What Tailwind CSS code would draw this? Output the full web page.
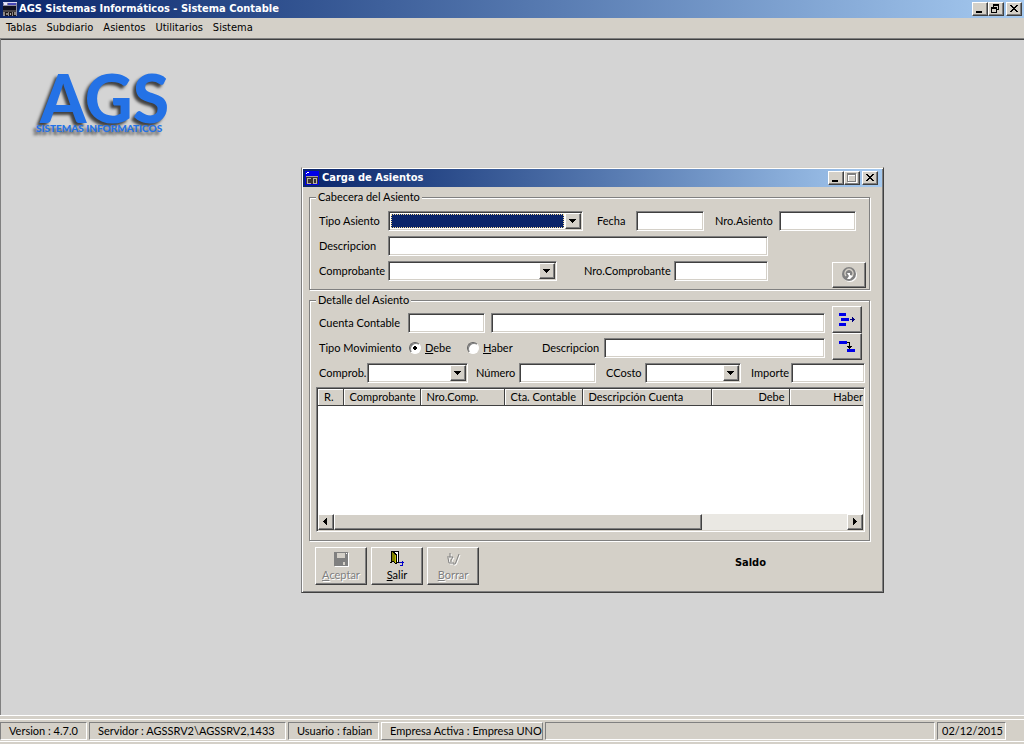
<!DOCTYPE html>
<html lang="es">
<head>
<meta charset="utf-8">
<title>AGS Sistemas Informáticos - Sistema Contable</title>
<script src="https://cdn.jsdelivr.net/npm/@tailwindcss/browser@4"></script>
</head>
<body class="flex h-screen flex-col overflow-hidden bg-[#d4d0c8] font-['Lato','Liberation_Sans',Arial,sans-serif] text-[11px] leading-3 text-black">

<!-- Application title bar -->
<header class="flex h-[18px] shrink-0 items-center bg-linear-to-r from-[#0a246a] to-[#a6caf0] pr-[2px] pl-[2px]">
  <svg class="mr-px size-4" viewBox="0 0 16 16" shape-rendering="crispEdges" aria-hidden="true">
    <rect x="1" y="1" width="14" height="14" fill="#8c8ca0"/><rect x="1" y="1" width="14" height="1" fill="#d8d8f0"/>
    <rect x="2" y="2" width="3" height="2" fill="#e8e8ff"/><rect x="6" y="2" width="8" height="2" fill="#4848b8"/>
    <rect x="1" y="5" width="13" height="4" fill="#10101c"/><rect x="1" y="9" width="13" height="2" fill="#4a4648"/>
    <rect x="1" y="11" width="13" height="3" fill="#8a8480"/><path d="M4 11h2v1H4v2h2v1H3v-4zM7 11h3v4H7zM11 11h1v3h2v1h-3z" fill="#1c1818"/>
    <rect x="8" y="12" width="1" height="2" fill="#aaa"/>
  </svg>
  <h1 class="flex-1 font-['DejaVu_Sans_Condensed','DejaVu_Sans',sans-serif] text-[11px] font-bold whitespace-nowrap text-white">AGS Sistemas Informáticos - Sistema Contable</h1>
  <button aria-label="Minimizar" class="h-[14px] w-4 border border-t-white border-r-[#404040] border-b-[#404040] border-l-white bg-[#d4d0c8] shadow-[inset_-1px_-1px_#808080]"><svg class="size-full" viewBox="0 0 14 12" shape-rendering="crispEdges"><path d="M3 8h6v2H3z"/></svg></button>
  <button aria-label="Restaurar" class="mr-[2px] h-[14px] w-4 border border-t-white border-r-[#404040] border-b-[#404040] border-l-white bg-[#d4d0c8] shadow-[inset_-1px_-1px_#808080]"><svg class="size-full" viewBox="0 0 14 12" shape-rendering="crispEdges"><path fill-rule="evenodd" d="M4 1h6v6H8V6h1V3H5v1H4zM2 4h6v6H2zM3 6v3h4V6z"/></svg></button>
  <button aria-label="Cerrar" class="h-[14px] w-4 border border-t-white border-r-[#404040] border-b-[#404040] border-l-white bg-[#d4d0c8] shadow-[inset_-1px_-1px_#808080]"><svg class="size-full" viewBox="0 0 14 12" shape-rendering="crispEdges"><path d="M3 2h2v1h1v1h2V3h1V2h2v1h-1v1H9v1H8v1h1v1h1v1h1v1H9V8H8V7H6v1H5v1H3V8h1V7h1V6h1V5H5V4H4V3H3z"/></svg></button>
</header>

<!-- Menu bar -->
<nav class="flex h-5 shrink-0 items-center gap-[10px] px-[6px] font-['DejaVu_Sans_Condensed','DejaVu_Sans',sans-serif] text-[11px]">
  <button>Tablas</button><button>Subdiario</button><button>Asientos</button><button>Utilitarios</button><button>Sistema</button>
</nav>

<!-- Workspace -->
<main class="relative flex-1 border-t border-l border-[#808080] bg-[#d4d4d4] shadow-[inset_0_1px_#404040]">
  <div class="absolute top-[35px] left-[35px] font-['Lato',sans-serif] font-black text-[#2472e6] [text-shadow:-3px_3px_3px_rgba(0,0,0,0.7)]">
    <p class="pl-1 text-[66px] leading-[48px]">AGS</p>
    <p class="text-[10px] leading-3 whitespace-nowrap">SISTEMAS INFORMATICOS</p>
  </div>

  <!-- Journal entry window -->
  <section aria-labelledby="dlg" class="absolute top-[128px] left-[300px] w-[583px] border border-t-[#d4d0c8] border-r-[#404040] border-b-[#404040] border-l-[#808080] bg-[#d4d0c8] p-px shadow-[inset_1px_1px_white,inset_-1px_-1px_#808080]">
    <div class="flex h-[18px] items-center bg-linear-to-r from-[#0a246a] to-[#a6caf0] pr-1 pl-[2px]">
      <svg class="mr-[3px] h-[14px] w-[14px]" viewBox="0 0 14 14" shape-rendering="crispEdges" aria-hidden="true">
        <rect width="14" height="14" fill="#0000e8"/><path d="M2 1h2v1H2zM1 2h1v1H1z" fill="#fff"/>
        <path d="M1 5h12v1H1z" fill="#a8a098"/><path d="M1 6h12v7H1z" fill="#383430"/><path d="M2 7h4v1H3v4h3v1H2zM8 7h4v6H8z" fill="#b8b0a8"/><path d="M9 8h2v4H9z" fill="#383430"/>
      </svg>
      <h2 id="dlg" class="flex-1 font-['DejaVu_Sans_Condensed','DejaVu_Sans',sans-serif] text-[11px] font-bold text-white">Carga de Asientos</h2>
      <button aria-label="Minimizar" class="h-[14px] w-4 border border-t-white border-r-[#404040] border-b-[#404040] border-l-white bg-[#d4d0c8] shadow-[inset_-1px_-1px_#808080]"><svg class="size-full" viewBox="0 0 14 12" shape-rendering="crispEdges"><path d="M3 8h6v2H3z"/></svg></button>
      <button aria-label="Maximizar" disabled class="mr-[2px] h-[14px] w-4 border border-t-white border-r-[#404040] border-b-[#404040] border-l-white bg-[#d4d0c8] shadow-[inset_-1px_-1px_#808080]"><svg class="size-full" viewBox="0 0 14 12" shape-rendering="crispEdges" fill-rule="evenodd"><path fill="#fff" d="M3 2h9v9H3zM4 4v6h7V4z"/><path fill="#808080" d="M2 1h9v9H2zM3 3v6h7V3z"/></svg></button>
      <button aria-label="Cerrar" class="h-[14px] w-4 border border-t-white border-r-[#404040] border-b-[#404040] border-l-white bg-[#d4d0c8] shadow-[inset_-1px_-1px_#808080]"><svg class="size-full" viewBox="0 0 14 12" shape-rendering="crispEdges"><path d="M3 2h2v1h1v1h2V3h1V2h2v1h-1v1H9v1H8v1h1v1h1v1h1v1H9V8H8V7H6v1H5v1H3V8h1V7h1V6h1V5H5V4H4V3H3z"/></svg></button>
    </div>

    <form class="flex flex-col pt-1 pr-3 pb-[6px] pl-[6px]">
      <fieldset class="min-w-0 border border-[#808080] pr-[3px] pb-2 pl-[9px] shadow-[1px_1px_white,inset_1px_1px_white]">
        <legend class="-ml-[3px] bg-[#d4d0c8] px-[2px]">Cabecera del Asiento</legend>
        <div class="flex flex-col gap-[5px] pt-2">
          <div class="flex h-5 items-center">
            <label for="tipo" class="w-[69px]">Tipo Asiento</label>
            <span class="mr-[14px] flex h-5 w-[195px] border border-t-[#808080] border-r-white border-b-white border-l-[#808080] bg-white p-px shadow-[inset_1px_1px_#404040,inset_-1px_-1px_#d4d0c8]">
              <select id="tipo" class="m-px min-w-0 flex-1 appearance-none border border-dotted border-[#f5db95] bg-[#0a246a] text-white outline-none"><option></option></select>
              <svg class="h-4 w-4 border border-t-white border-r-[#404040] border-b-[#404040] border-l-white bg-[#d4d0c8] shadow-[inset_-1px_-1px_#808080]" viewBox="0 0 14 14" shape-rendering="crispEdges" aria-hidden="true"><path d="M3 5h7v1H9v1H8v1H7v1H6V8H5V7H4V6H3z"/></svg>
            </span>
            <label for="fecha" class="w-[39px]">Fecha</label>
            <input id="fecha" class="mr-[11px] h-5 w-[68px] border border-t-[#808080] border-r-white border-b-white border-l-[#808080] bg-white px-1 shadow-[inset_1px_1px_#404040,inset_-1px_-1px_#d4d0c8] outline-none">
            <label for="nro" class="w-16">Nro.Asiento</label>
            <input id="nro" class="h-5 w-[77px] border border-t-[#808080] border-r-white border-b-white border-l-[#808080] bg-white px-1 shadow-[inset_1px_1px_#404040,inset_-1px_-1px_#d4d0c8] outline-none">
          </div>
          <div class="flex h-5 items-center">
            <label for="desc" class="w-[69px]">Descripcion</label>
            <input id="desc" class="h-5 w-[380px] border border-t-[#808080] border-r-white border-b-white border-l-[#808080] bg-white px-1 shadow-[inset_1px_1px_#404040,inset_-1px_-1px_#d4d0c8] outline-none">
          </div>
          <div class="flex h-5 items-center">
            <label for="comp" class="w-[69px]">Comprobante</label>
            <span class="mr-[27px] flex h-5 w-[169px] border border-t-[#808080] border-r-white border-b-white border-l-[#808080] bg-white p-px shadow-[inset_1px_1px_#404040,inset_-1px_-1px_#d4d0c8]">
              <select id="comp" class="min-w-0 flex-1 appearance-none outline-none"><option></option></select>
              <svg class="h-4 w-4 border border-t-white border-r-[#404040] border-b-[#404040] border-l-white bg-[#d4d0c8] shadow-[inset_-1px_-1px_#808080]" viewBox="0 0 14 14" shape-rendering="crispEdges" aria-hidden="true"><path d="M3 5h7v1H9v1H8v1H7v1H6V8H5V7H4V6H3z"/></svg>
            </span>
            <label for="nrocomp" class="w-[90px]">Nro.Comprobante</label>
            <input id="nrocomp" class="h-5 w-[94px] border border-t-[#808080] border-r-white border-b-white border-l-[#808080] bg-white px-1 shadow-[inset_1px_1px_#404040,inset_-1px_-1px_#d4d0c8] outline-none">
            <button type="button" disabled aria-label="Confirmar cabecera" class="mt-[7px] ml-auto grid h-[26px] w-[34px] shrink-0 place-items-center border border-t-white border-r-[#404040] border-b-[#404040] border-l-white bg-[#d4d0c8] shadow-[inset_-1px_-1px_#808080]">
              <svg class="size-4" viewBox="0 0 16 16"><circle cx="9" cy="8" r="7" fill="#fff"/><circle cx="8" cy="7" r="7" fill="#808080"/><path d="M5 9A4 4 0 1 1 11 9" fill="none" stroke="#d4d0c8" stroke-width="1.500"/><path d="M6 6h3v2l3 1-3 3H6l2-3z" fill="#fff"/></svg>
            </button>
          </div>
        </div>
      </fieldset>

      <fieldset class="mt-1 min-w-0 border border-[#808080] pr-1 pb-2 pl-[6px] shadow-[1px_1px_white,inset_1px_1px_white]">
        <legend class="bg-[#d4d0c8] px-[2px]">Detalle del Asiento</legend>
        <div class="flex pl-[3px]">
          <div class="flex min-w-0 flex-1 flex-col gap-[5px] pt-[7px] pr-[7px]">
            <div class="flex h-5 items-center">
              <label for="cta" class="w-[89px]">Cuenta Contable</label>
              <input id="cta" class="mr-[6px] h-5 w-[77px] border border-t-[#808080] border-r-white border-b-white border-l-[#808080] bg-white px-1 shadow-[inset_1px_1px_#404040,inset_-1px_-1px_#d4d0c8] outline-none">
              <input aria-label="Nombre de la cuenta" class="h-5 min-w-0 flex-1 border border-t-[#808080] border-r-white border-b-white border-l-[#808080] bg-white px-1 shadow-[inset_1px_1px_#404040,inset_-1px_-1px_#d4d0c8] outline-none">
            </div>
            <div class="flex h-5 items-center">
              <span class="w-[90px]">Tipo Movimiento</span>
              <label class="flex w-[58px] items-center gap-1"><input type="radio" name="mov" checked class="size-3 appearance-none rounded-full border border-t-[#606060] border-r-white border-b-white border-l-[#606060] bg-white bg-[radial-gradient(circle,#000_2px,#fff_2px)] shadow-[inset_1px_1px_#808080]"><span><u>D</u>ebe</span></label>
              <label class="flex w-[75px] items-center gap-1"><input type="radio" name="mov" class="size-3 appearance-none rounded-full border border-t-[#606060] border-r-white border-b-white border-l-[#606060] bg-white shadow-[inset_1px_1px_#808080]"><span><u>H</u>aber</span></label>
              <label for="desc2" class="w-[62px]">Descripcion</label>
              <input id="desc2" class="h-5 min-w-0 flex-1 border border-t-[#808080] border-r-white border-b-white border-l-[#808080] bg-white px-1 shadow-[inset_1px_1px_#404040,inset_-1px_-1px_#d4d0c8] outline-none">
            </div>
          </div>
          <div class="mr-[3px] flex shrink-0 flex-col">
            <button type="button" aria-label="Agregar renglón" class="grid h-[27px] w-[30px] place-items-center border border-t-white border-r-[#404040] border-b-[#404040] border-l-white shadow-[inset_-1px_-1px_#808080]">
              <svg class="h-4 w-[18px]" viewBox="0 0 18 16" shape-rendering="crispEdges"><path d="M1 1h7v3H1zM3 6h8v3H3zM1 11h7v3H1z" fill="#0000e8"/><path d="M12 7h5v1h-5zM14 5h1v5h-1zM15 6h1v3h-1z" fill="#000080"/></svg>
            </button>
            <button type="button" aria-label="Insertar renglón" class="grid h-[27px] w-[30px] place-items-center border border-t-white border-r-[#404040] border-b-[#404040] border-l-white shadow-[inset_-1px_-1px_#808080]">
              <svg class="h-4 w-[18px]" viewBox="0 0 18 16" shape-rendering="crispEdges"><path d="M1 2h8v3H1zM9 10h8v3H9z" fill="#0000e8"/><path d="M9 3h3v4h2v1h-1v1h-1v1h-1V9h-1V8H9V7h2V4H9z"/></svg>
            </button>
          </div>
        </div>
        <div class="mt-[3px] flex h-5 items-center pl-[3px]">
          <label for="comprob" class="w-12 shrink-0">Comprob.</label>
          <span class="mr-2 flex h-5 w-[101px] shrink-0 border border-t-[#808080] border-r-white border-b-white border-l-[#808080] bg-white p-px shadow-[inset_1px_1px_#404040,inset_-1px_-1px_#d4d0c8]">
            <select id="comprob" class="min-w-0 flex-1 appearance-none outline-none"><option></option></select>
            <svg class="h-4 w-4 border border-t-white border-r-[#404040] border-b-[#404040] border-l-white bg-[#d4d0c8] shadow-[inset_-1px_-1px_#808080]" viewBox="0 0 14 14" shape-rendering="crispEdges" aria-hidden="true"><path d="M3 5h7v1H9v1H8v1H7v1H6V8H5V7H4V6H3z"/></svg>
          </span>
          <label for="num" class="w-[43px]">Número</label>
          <input id="num" class="mr-[10px] h-5 w-[77px] border border-t-[#808080] border-r-white border-b-white border-l-[#808080] bg-white px-1 shadow-[inset_1px_1px_#404040,inset_-1px_-1px_#d4d0c8] outline-none">
          <label for="cc" class="w-[39px]">CCosto</label>
          <span class="mr-[10px] flex h-5 w-[96px] shrink-0 border border-t-[#808080] border-r-white border-b-white border-l-[#808080] bg-white p-px shadow-[inset_1px_1px_#404040,inset_-1px_-1px_#d4d0c8]">
            <select id="cc" class="min-w-0 flex-1 appearance-none outline-none"><option></option></select>
            <svg class="h-4 w-4 border border-t-white border-r-[#404040] border-b-[#404040] border-l-white bg-[#d4d0c8] shadow-[inset_-1px_-1px_#808080]" viewBox="0 0 14 14" shape-rendering="crispEdges" aria-hidden="true"><path d="M3 5h7v1H9v1H8v1H7v1H6V8H5V7H4V6H3z"/></svg>
          </span>
          <label for="imp" class="w-10">Importe</label>
          <input id="imp" class="h-5 min-w-0 flex-1 border border-t-[#808080] border-r-white border-b-white border-l-[#808080] bg-white px-1 shadow-[inset_1px_1px_#404040,inset_-1px_-1px_#d4d0c8] outline-none">
        </div>
        <div class="mt-1 flex flex-col border border-t-[#808080] border-r-white border-b-white border-l-[#808080] bg-white p-px shadow-[inset_1px_1px_#404040,inset_-1px_-1px_#d4d0c8]">
          <div class="h-[125px] overflow-hidden">
            <table class="w-full table-fixed border-collapse">
              <thead>
                <tr class="h-4 bg-[#d4d0c8] text-left whitespace-nowrap shadow-[inset_0_1px_white] [&>th]:border-r [&>th]:border-b [&>th]:border-[#404040] [&>th]:py-0 [&>th]:pt-px [&>th]:font-normal [&>th]:shadow-[inset_1px_1px_white]">
                  <th scope="col" class="w-[25px] px-[6px]">R.</th>
                  <th scope="col" class="w-[77px] px-[6px]">Comprobante</th>
                  <th scope="col" class="w-[84px] px-[6px]">Nro.Comp.</th>
                  <th scope="col" class="w-[78px] px-[6px]">Cta. Contable</th>
                  <th scope="col" class="w-[129px] px-[6px]">Descripción Cuenta</th>
                  <th scope="col" class="w-[78px] px-1 text-right">Debe</th>
                  <th scope="col" class="border-r-0! text-right">Haber</th>
                </tr>
              </thead>
              <tbody></tbody>
            </table>
          </div>
          <div class="flex h-4 bg-[#eae8e3]" role="presentation">
            <button type="button" aria-label="Desplazar a la izquierda" class="w-4 border border-t-white border-r-[#404040] border-b-[#404040] border-l-white bg-[#d4d0c8] shadow-[inset_-1px_-1px_#808080]"><svg class="size-full" viewBox="0 0 14 14" shape-rendering="crispEdges"><path d="M8 3v7H7V9H6V8H5V7H4V6h1V5h1V4h1V3z"/></svg></button>
            <div class="w-[368px] border border-t-white border-r-[#404040] border-b-[#404040] border-l-white bg-[#d4d0c8] shadow-[inset_-1px_-1px_#808080]"></div>
            <button type="button" aria-label="Desplazar a la derecha" class="ml-auto w-4 border border-t-white border-r-[#404040] border-b-[#404040] border-l-white bg-[#d4d0c8] shadow-[inset_-1px_-1px_#808080]"><svg class="size-full" viewBox="0 0 14 14" shape-rendering="crispEdges"><path d="M5 3h1v1h1v1h1v1h1v1H8v1H7v1H6v1H5z"/></svg></button>
          </div>
        </div>
      </fieldset>

      <div class="mt-[6px] flex gap-1 pl-[6px]">
        <button type="button" disabled class="flex h-[38px] w-[52px] flex-col items-center border border-t-white border-r-[#404040] border-b-[#404040] border-l-white pt-[3px] text-[#808080] shadow-[inset_-1px_-1px_#808080] [text-shadow:1px_1px_white]">
          <svg class="mb-[2px] size-4" viewBox="0 0 16 16" shape-rendering="crispEdges"><path d="M2 2h14v14H2z" fill="#fff"/><path d="M1 1h14v14H1z" fill="#808080"/><path d="M4 2h8v5H4zM10 11h2v3h-2z" fill="#d4d0c8"/><path d="M13 2h1v1h-1z" fill="#fff"/></svg>
          <span><u>A</u>ceptar</span>
        </button>
        <button type="button" class="flex h-[38px] w-[52px] flex-col items-center border border-t-white border-r-[#404040] border-b-[#404040] border-l-white pt-[3px] shadow-[inset_-1px_-1px_#808080]">
          <svg class="mb-[2px] size-4" viewBox="0 0 16 16" shape-rendering="crispEdges"><path d="M2 0h8v12H8v1H6v-1H5v-1H2z"/><path d="M6 1h3v10H8V3H7V2H6z" fill="#fff"/><path d="M3 1h1v1h1v1h1v8H5v-1H3z" fill="#808000"/><path d="M6 4h1v8H6z" fill="#c0c000"/><path d="M1 11h2v1H1z"/><path d="M10 11h3v-1h1v1h1v1h-1v3h-3v-1h2v-2h-3z" fill="#0000c8"/></svg>
          <span><u>S</u>alir</span>
        </button>
        <button type="button" disabled class="flex h-[38px] w-[52px] flex-col items-center border border-t-white border-r-[#404040] border-b-[#404040] border-l-white pt-[3px] text-[#808080] shadow-[inset_-1px_-1px_#808080] [text-shadow:1px_1px_white]">
          <svg class="mb-[2px] size-4" viewBox="0 0 16 16" fill="none"><g stroke="#fff" transform="translate(1 1)"><path d="M5 2v4M2 6h6L6 9M3 7l1 5h5M6 9v2M14 3l-3 8-1 2H8"/></g><g stroke="#808080"><path d="M5 2v4M2 6h6L6 9M3 7l1 5h5M6 9v2M14 3l-3 8-1 2H8"/></g></svg>
          <span><u>B</u>orrar</span>
        </button>
        <p class="mt-[10px] mr-[104px] ml-auto font-['DejaVu_Sans_Condensed','DejaVu_Sans',sans-serif] text-[11px] font-bold">Saldo</p>
      </div>
    </form>
  </section>
</main>

<!-- Status bar -->
<footer class="shrink-0 border-t border-white pt-[3px] pb-[2px]">
  <div class="flex h-[23px] items-stretch gap-[2px] border-t border-b border-white pt-[2px] pr-[18px] pb-px whitespace-nowrap [&>span]:flex [&>span]:items-center [&>span]:border [&>span]:pl-2">
    <span class="w-[87px] border-t-[#808080] border-r-white border-b-white border-l-[#808080]">Version : 4.7.0</span>
    <span class="w-[197px] border-t-[#808080] border-r-white border-b-white border-l-[#808080]">Servidor : AGSSRV2\AGSSRV2,1433</span>
    <span class="w-[91px] border-t-[#808080] border-r-white border-b-white border-l-[#808080]">Usuario : fabian</span>
    <span class="w-[162px] border-t-white border-r-[#808080] border-b-[#808080] border-l-white">Empresa Activa : Empresa UNO</span>
    <span class="flex-1 border-t-[#808080] border-r-white border-b-white border-l-[#808080]"></span>
    <span class="w-[69px] border-t-[#808080] border-r-white border-b-white border-l-[#808080] pl-1!">02/12/2015</span>
  </div>
</footer>
</body>
</html>
